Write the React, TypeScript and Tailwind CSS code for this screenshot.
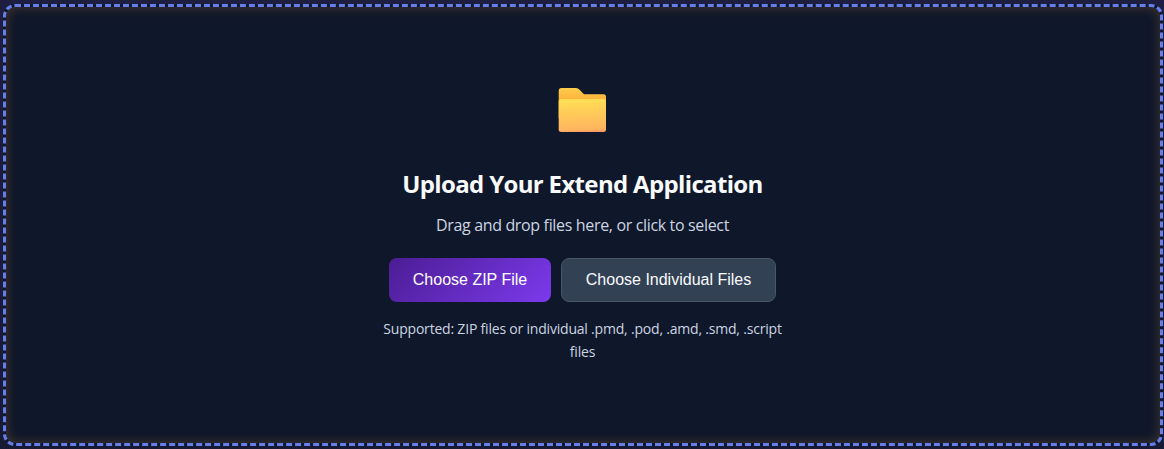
function FolderIcon() {
  return (
    <svg width="48" height="44" viewBox="0 0 48 44" aria-hidden="true">
      <defs>
        <linearGradient id="back" x1="0" y1="0" x2="0" y2="1">
          <stop offset="0" stopColor="#ffcc4e" />
          <stop offset="0.35" stopColor="#fdb53c" />
        </linearGradient>
        <linearGradient id="front" x1="0.47" y1="0" x2="0.53" y2="1">
          <stop offset="0" stopColor="#ffdf55" />
          <stop offset="0.93" stopColor="#ffb45e" />
          <stop offset="1" stopColor="#f59a68" />
        </linearGradient>
      </defs>
      <path d="M3 0H17.5Q19.5 0 21 1.3L26 6.3H45.5Q48 6.3 48 8.8V30H.7V2.5Q.7 0 3 0Z" fill="url(#back)" />
      <path d="M3.3 11H45.5Q48 11 48 13.5V41.5Q48 44 45.5 44H3.3Q.7 44 .7 41.5V13.5Q.7 11 3.3 11Z" fill="url(#front)" />
    </svg>
  );
}

export default function App() {
  return (
    <main className="h-[449px] w-[1164px] bg-linear-to-b from-[#1e1e40] to-[#171a35] pt-1 pl-[3px] font-['Open_Sans','Noto_Sans',sans-serif]">
      <section className="flex h-[442px] w-[1160px] flex-col items-center rounded-xl border-[3px] border-dashed border-[#667eea] bg-[#0f172a] pt-[81px] pr-0.5 shadow-[inset_0_0_12px_rgba(255,160,60,0.24)]">
        <FolderIcon />
        <h3 className="mt-[35px] pl-px text-[24px] leading-[34px] font-bold tracking-[-0.66px] whitespace-nowrap text-[#f8fafc]">
          Upload Your Extend Application
        </h3>
        <p className="mt-[11px] pl-px text-[16px] leading-[26px] tracking-[-0.34px] whitespace-nowrap text-[#cbd5e1]">
          Drag and drop files here, or click to select
        </p>
        <div className="mt-5 flex gap-2.5 font-['Liberation_Sans',Arial,sans-serif] text-[16px] leading-[18px]">
          <button className="h-11 w-[162px] rounded-lg bg-linear-135 from-[#4c1d95] to-[#7c3aed] pb-px pl-px text-white">
            Choose ZIP File
          </button>
          <button className="h-11 w-[215px] rounded-lg border border-[#475569] bg-[#334155] pb-px pl-px text-[#f8fafc]">
            Choose Individual Files
          </button>
        </div>
        <p className="mt-[15px] pl-px text-center text-[14px] leading-[23px] tracking-[-0.2px] text-[#cbd5e1]">
          Supported: ZIP files or individual .pmd, .pod, .amd, .smd, .script
          <br />
          files
        </p>
      </section>
    </main>
  );
}
